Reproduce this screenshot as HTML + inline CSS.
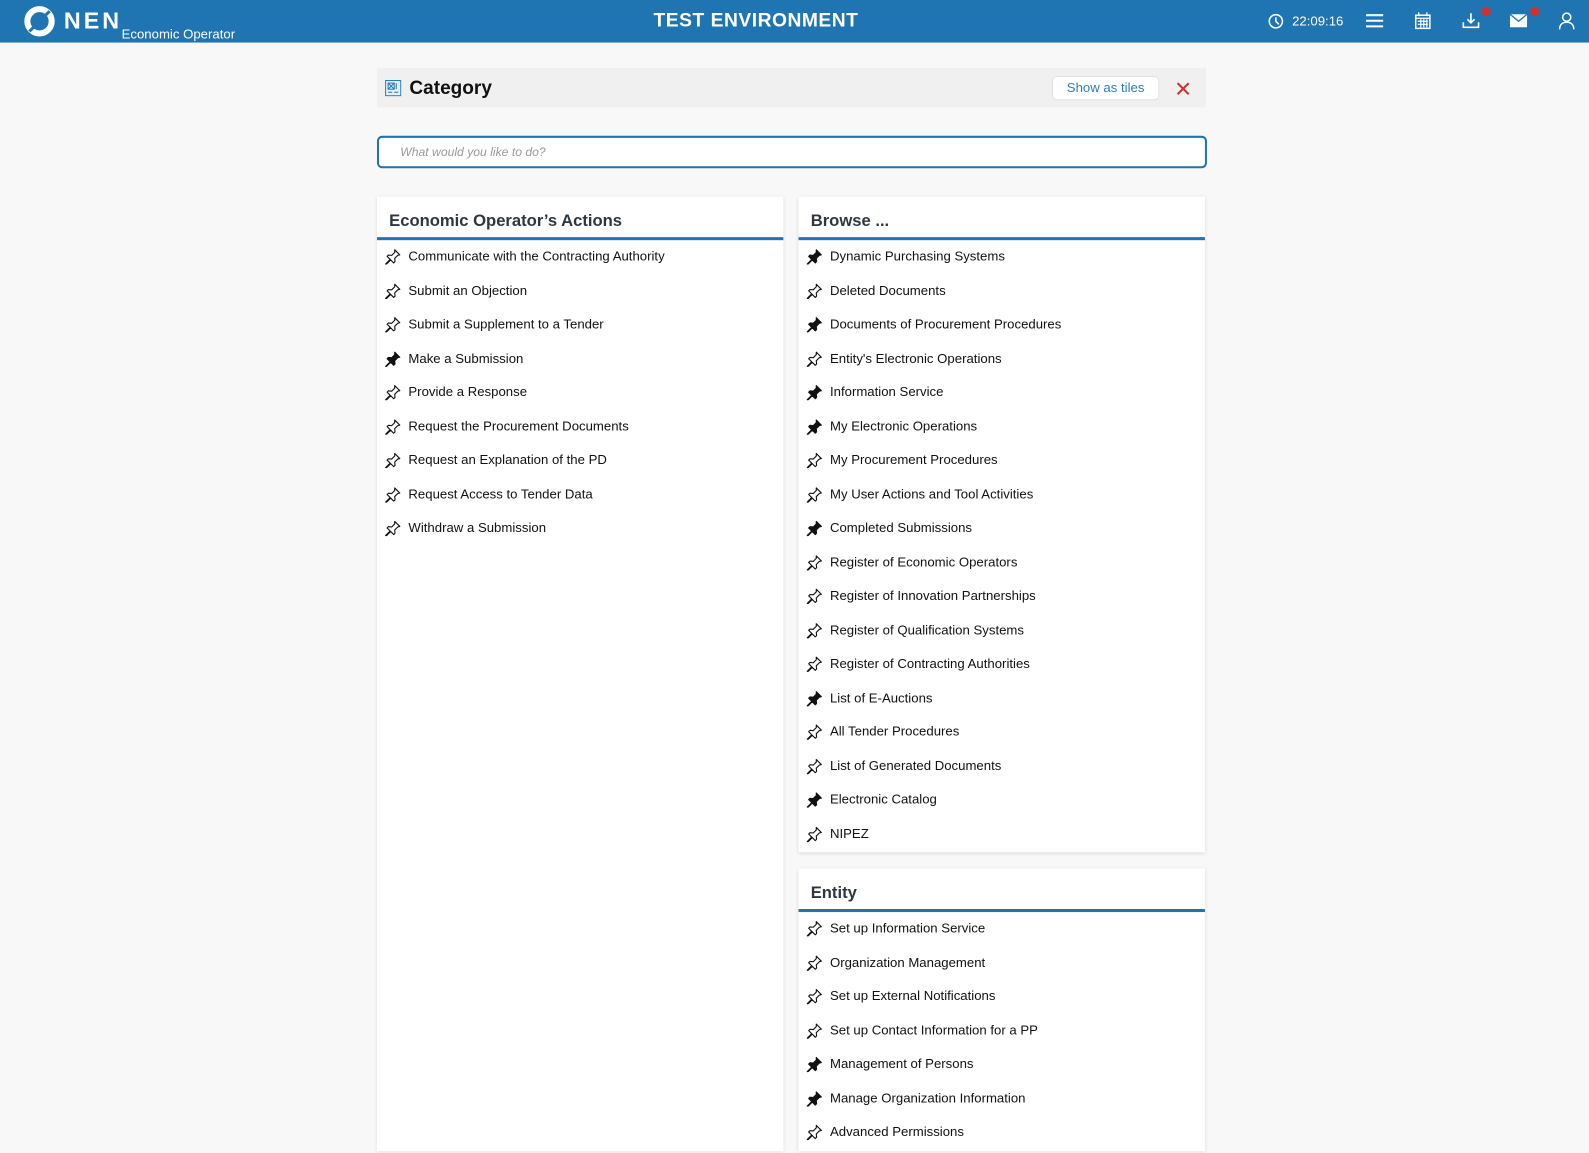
<!DOCTYPE html>
<html><head><meta charset="utf-8"><style>
*{box-sizing:border-box;margin:0;padding:0}
html,body{width:1589px;height:1153px;overflow:hidden;background:#f8f8f8}
body{font-family:"Liberation Sans",sans-serif;color:#111}
#w{position:absolute;left:0;top:0;width:1568px;height:1138px;transform:scale(1.01339);transform-origin:0 0}
.hdr{position:absolute;left:0;top:0;width:1568px;height:42px;background:#1f74b2;color:#fff}
.logo{position:absolute;left:23px;top:5px}
.nen{position:absolute;left:63px;top:7px;font-size:23px;font-weight:bold;letter-spacing:3px}
.eo{position:absolute;left:120px;top:26px;font-size:13px}
.te{position:absolute;left:0;width:1492px;text-align:center;top:10px;font-size:19px;font-weight:bold;letter-spacing:.5px}
.clock{position:absolute;left:1275px;top:13px;font-size:13px}
.ic{position:absolute;top:11px}
.dot{position:absolute;width:9px;height:9px;border-radius:50%;background:#d32f2f}
.cat{position:absolute;left:372px;top:67px;width:818px;height:39px;background:#f0f0f0}
.cat h1{position:absolute;left:32px;top:9px;font-size:18.8px;font-weight:bold}
.btn{position:absolute;left:666px;top:8px;width:106px;height:24px;background:#fff;border:1px solid #e2e2e2;border-radius:5px;color:#2d7cbd;font-size:13px;text-align:center;line-height:22px}
.search{position:absolute;left:372px;top:134px;width:819px;height:32px;border:2px solid #1f74b2;border-radius:5px;background:#fff;font-size:12px;font-style:italic;color:#999;padding:7px 21px}
.card{position:absolute;background:#fff;box-shadow:0 1px 4px rgba(0,0,0,.12)}
.card h2{font-size:16.4px;font-weight:bold;color:#2f3640;padding:15px 12px 4px;border-bottom:3px solid #1f74b2;height:43px}
.card ul{list-style:none;margin-top:-1px}
.card li{height:33.5px;line-height:33.5px;font-size:13px;padding-left:31px;position:relative}
.card li svg{position:absolute;left:8px;top:9px}
</style></head><body><div id="w">
<div class="hdr">
<svg class="logo" width="32" height="32" viewBox="0 0 32 32"><circle cx="16" cy="16" r="12" fill="none" stroke="#fff" stroke-width="6"/><path d="M6 26 L12 20" stroke="#1f74b2" stroke-width="3"/><path d="M26 6 L20 12" stroke="#1f74b2" stroke-width="3"/></svg>
<div class="nen">NEN</div><div class="eo">Economic Operator</div>
<div class="te">TEST ENVIRONMENT</div>
<svg class="ic" style="left:1251px;top:13px" width="16" height="16" viewBox="0 0 16 16"><circle cx="8" cy="8" r="6.5" fill="none" stroke="#fff" stroke-width="1.5"/><path d="M8 4v4l3 3" stroke="#fff" stroke-width="1.5" fill="none"/></svg>
<div class="clock">22:09:16</div>
<svg class="ic" style="left:1348px;top:13px" width="17" height="15"><path d="M0 2h17M0 7.5h17M0 13h17" stroke="#fff" stroke-width="2"/></svg>
<svg class="ic" style="left:1396px;top:12px" width="16" height="17"><rect x="1" y="3" width="14" height="13" fill="none" stroke="#fff" stroke-width="1.5"/><path d="M4 0v4M12 0v4M1 6h14M3 9h10M3 12h10M6 7v8M9 7v8M12 7v8" stroke="#fff" stroke-width="1.2"/></svg>
<svg class="ic" style="left:1443px;top:13px" width="17" height="16"><path d="M8.5 0v9M5 6l3.5 3.5L12 6M1 9v5h15V9" stroke="#fff" stroke-width="1.6" fill="none"/></svg>
<div class="dot" style="left:1462px;top:7px"></div>
<svg class="ic" style="left:1490px;top:14px" width="17" height="13"><rect x="0" y="0" width="17" height="13" fill="#fff"/><path d="M0 0l8.5 7L17 0" stroke="#1f74b2" stroke-width="1.3" fill="none"/></svg>
<div class="dot" style="left:1510px;top:7px"></div>
<svg class="ic" style="left:1538px;top:12px" width="16" height="18"><circle cx="8" cy="5" r="4" fill="none" stroke="#fff" stroke-width="1.5"/><path d="M1 17c0-5 3-7 7-7s7 2 7 7" fill="none" stroke="#fff" stroke-width="1.5"/></svg>
</div>
<div class="cat">
<svg style="position:absolute;left:8px;top:12px" width="16" height="16"><rect x=".5" y=".5" width="15" height="15" fill="#e6f0fa" stroke="#1f74b2"/><rect x="3" y="3" width="6" height="6" fill="none" stroke="#1f74b2"/><path d="M3 3l6 6M9 3l-6 6M11 3v6M3 12h4M9 12h4" stroke="#1f74b2"/></svg>
<h1>Category</h1><div class="btn">Show as tiles</div>
<svg style="position:absolute;left:789px;top:14px" width="13" height="13"><path d="M1 1l11 11M12 1L1 12" stroke="#d32f2f" stroke-width="2"/></svg>
</div>
<div class="search">What would you like to do?</div>
<svg width="0" height="0" style="position:absolute"><defs>
<symbol id="po" viewBox="0 0 16 16"><path d="M9.5 1.5l5 5-2 .5-3 3 .3 3.2-1.3 1.3-3-3L1 16l-.5-.5 4.5-4.5-3-3 1.3-1.3 3.2.3 3-3z" fill="none" stroke="#111" stroke-width="1.1" stroke-linejoin="round"/></symbol>
<symbol id="pf" viewBox="0 0 16 16"><path d="M9.5 1.5l5 5-2 .5-3 3 .3 3.2-1.3 1.3-3-3L1 16l-.5-.5 4.5-4.5-3-3 1.3-1.3 3.2.3 3-3z" fill="#111" stroke="#111" stroke-width="1.1" stroke-linejoin="round"/></symbol>
</defs></svg>
<div class="card" style="left:372px;top:194px;width:401px;height:942px">
<h2>Economic Operator’s Actions</h2><ul>
<li><svg width="16" height="16"><use href="#po"/></svg>Communicate with the Contracting Authority</li>
<li><svg width="16" height="16"><use href="#po"/></svg>Submit an Objection</li>
<li><svg width="16" height="16"><use href="#po"/></svg>Submit a Supplement to a Tender</li>
<li><svg width="16" height="16"><use href="#pf"/></svg>Make a Submission</li>
<li><svg width="16" height="16"><use href="#po"/></svg>Provide a Response</li>
<li><svg width="16" height="16"><use href="#po"/></svg>Request the Procurement Documents</li>
<li><svg width="16" height="16"><use href="#po"/></svg>Request an Explanation of the PD</li>
<li><svg width="16" height="16"><use href="#po"/></svg>Request Access to Tender Data</li>
<li><svg width="16" height="16"><use href="#po"/></svg>Withdraw a Submission</li>
</ul></div>
<div class="card" style="left:788px;top:194px;width:401px;height:647px">
<h2>Browse ...</h2><ul>
<li><svg width="16" height="16"><use href="#pf"/></svg>Dynamic Purchasing Systems</li>
<li><svg width="16" height="16"><use href="#po"/></svg>Deleted Documents</li>
<li><svg width="16" height="16"><use href="#pf"/></svg>Documents of Procurement Procedures</li>
<li><svg width="16" height="16"><use href="#po"/></svg>Entity's Electronic Operations</li>
<li><svg width="16" height="16"><use href="#pf"/></svg>Information Service</li>
<li><svg width="16" height="16"><use href="#pf"/></svg>My Electronic Operations</li>
<li><svg width="16" height="16"><use href="#po"/></svg>My Procurement Procedures</li>
<li><svg width="16" height="16"><use href="#po"/></svg>My User Actions and Tool Activities</li>
<li><svg width="16" height="16"><use href="#pf"/></svg>Completed Submissions</li>
<li><svg width="16" height="16"><use href="#po"/></svg>Register of Economic Operators</li>
<li><svg width="16" height="16"><use href="#po"/></svg>Register of Innovation Partnerships</li>
<li><svg width="16" height="16"><use href="#po"/></svg>Register of Qualification Systems</li>
<li><svg width="16" height="16"><use href="#po"/></svg>Register of Contracting Authorities</li>
<li><svg width="16" height="16"><use href="#pf"/></svg>List of E-Auctions</li>
<li><svg width="16" height="16"><use href="#po"/></svg>All Tender Procedures</li>
<li><svg width="16" height="16"><use href="#po"/></svg>List of Generated Documents</li>
<li><svg width="16" height="16"><use href="#pf"/></svg>Electronic Catalog</li>
<li><svg width="16" height="16"><use href="#po"/></svg>NIPEZ</li>
</ul></div>
<div class="card" style="left:788px;top:857px;width:401px;height:279px">
<h2>Entity</h2><ul>
<li><svg width="16" height="16"><use href="#po"/></svg>Set up Information Service</li>
<li><svg width="16" height="16"><use href="#po"/></svg>Organization Management</li>
<li><svg width="16" height="16"><use href="#po"/></svg>Set up External Notifications</li>
<li><svg width="16" height="16"><use href="#po"/></svg>Set up Contact Information for a PP</li>
<li><svg width="16" height="16"><use href="#pf"/></svg>Management of Persons</li>
<li><svg width="16" height="16"><use href="#pf"/></svg>Manage Organization Information</li>
<li><svg width="16" height="16"><use href="#po"/></svg>Advanced Permissions</li>
</ul></div>
</div></body></html>
